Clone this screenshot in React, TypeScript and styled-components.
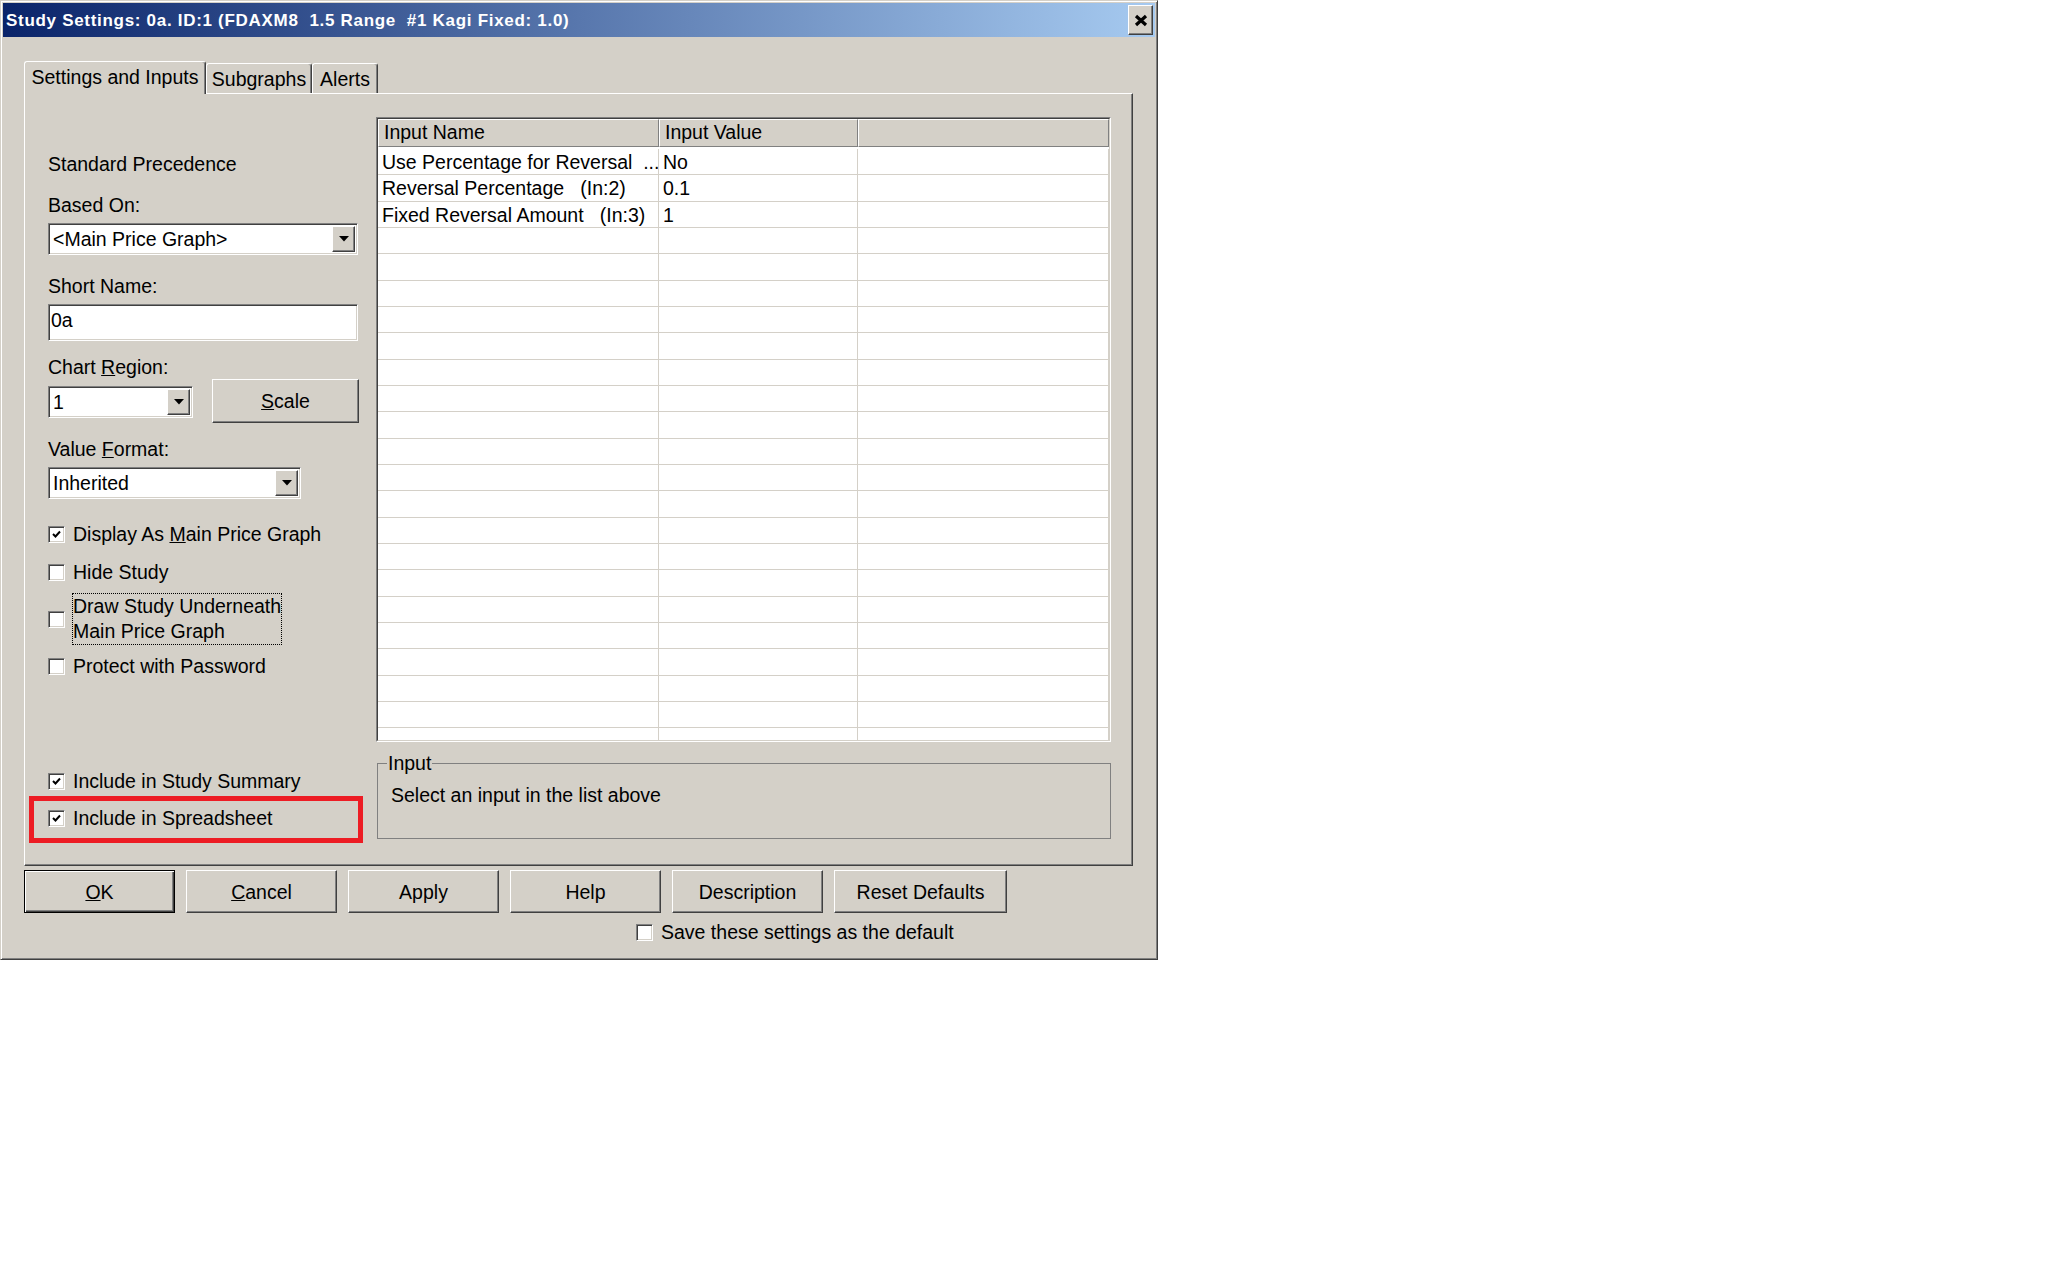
import React from 'react';
import styled, { createGlobalStyle } from 'styled-components';

const GlobalStyle = createGlobalStyle`
  body {
    margin: 0;
    background: #ffffff;
    font-family: "Liberation Sans", Arial, sans-serif;
    font-size: 19.5px;
    color: #000000;
  }
`;

const Window = styled.div`
  width: 1158px;
  height: 960px;
  box-sizing: border-box;
  background: #d4d0c8;
  border: 1px solid;
  border-color: #d4d0c8 #404040 #404040 #d4d0c8;
  box-shadow: inset 1px 1px #ffffff, inset -1px -1px #808080;
  padding: 2px;
  display: flex;
  flex-direction: column;
`;

const TitleBar = styled.div`
  height: 34px;
  flex-shrink: 0;
  display: flex;
  align-items: center;
  justify-content: space-between;
  padding: 0 2px 0 3px;
  background: linear-gradient(to right, #0a246a, #a6caf0);
`;

const TitleText = styled.span`
  color: #ffffff;
  font-weight: bold;
  font-size: 17px;
  letter-spacing: 0.7px;
  white-space: pre;
  padding-top: 1px;
`;

const Raised = `
  background: #d4d0c8;
  border: 1px solid;
  border-color: #ffffff #404040 #404040 #ffffff;
  box-shadow: inset -1px -1px #808080;
`;

const Sunken = `
  background: #ffffff;
  border: 1px solid;
  border-color: #808080 #ffffff #ffffff #808080;
  box-shadow: inset 1px 1px #404040, inset -1px -1px #d4d0c8;
`;

const CloseButton = styled.div`
  ${Raised}
  width: 25px;
  height: 30px;
  box-sizing: border-box;
  display: flex;
  align-items: center;
  justify-content: center;
`;

const Body = styled.div`
  display: flex;
  flex-direction: column;
  padding-left: 21px;
`;

const TabStrip = styled.div`
  margin-top: 24px;
  height: 32px;
  display: flex;
  align-items: flex-end;
`;

const Tab = styled.div<{ $active?: boolean; $width: number }>`
  position: relative;
  z-index: ${p => (p.$active ? 1 : 0)};
  box-sizing: border-box;
  width: ${p => p.$width}px;
  height: ${p => (p.$active ? 33 : 30)}px;
  margin-bottom: ${p => (p.$active ? -1 : 0)}px;
  background: #d4d0c8;
  border: 1px solid;
  border-color: #ffffff #404040 transparent #ffffff;
  border-bottom: none;
  box-shadow: inset -1px 0 #808080;
  border-radius: 3px 3px 0 0;
  padding-top: 4px;
  line-height: 22px;
  text-align: center;
  white-space: nowrap;
`;

const Panel = styled.div`
  box-sizing: border-box;
  width: 1109px;
  height: 773px;
  border: 1px solid;
  border-color: #ffffff #404040 #404040 #ffffff;
  box-shadow: inset -1px -1px #808080;
  display: flex;
`;

const LeftCol = styled.div`
  box-sizing: border-box;
  width: 351px;
  padding-left: 23px;
  display: flex;
  flex-direction: column;
  align-items: flex-start;
`;

const RightCol = styled.div`
  width: 735px;
  display: flex;
  flex-direction: column;
`;

const FieldLabel = styled.div<{ $mt: number }>`
  margin-top: ${p => p.$mt}px;
  line-height: 22px;
  white-space: nowrap;
`;

const Combo = styled.div<{ $width: number; $mt?: number }>`
  ${Sunken}
  box-sizing: border-box;
  width: ${p => p.$width}px;
  height: 32px;
  margin-top: ${p => p.$mt ?? 7}px;
  padding: 2px;
  display: flex;
  align-items: center;
  flex-shrink: 0;
`;

const ComboText = styled.span`
  flex: 1;
  padding-left: 2px;
  line-height: 22px;
  white-space: nowrap;
`;

const DropButton = styled.div`
  ${Raised}
  box-sizing: border-box;
  width: 23px;
  align-self: stretch;
  display: flex;
  align-items: center;
  justify-content: center;
`;

const TextField = styled.div`
  ${Sunken}
  box-sizing: border-box;
  width: 310px;
  height: 37px;
  margin-top: 7px;
  padding: 4px 2px 0;
  line-height: 22px;
`;

const RegionRow = styled.div`
  margin-top: 1px;
  display: flex;
  align-items: flex-start;
  gap: 19px;
`;

const PushButton = styled.div<{ $width: number; $height: number; $default?: boolean }>`
  ${Raised}
  box-sizing: border-box;
  width: ${p => p.$width}px;
  height: ${p => p.$height}px;
  display: flex;
  align-items: center;
  justify-content: center;
  line-height: 22px;
  white-space: nowrap;
  ${p =>
    p.$default &&
    `
    border: 1px solid #000000;
    box-shadow: inset 1px 1px #ffffff, inset -1px -1px #404040, inset -2px -2px #808080;
  `}
`;

const CheckRow = styled.div<{ $mt: number }>`
  margin-top: ${p => p.$mt}px;
  display: flex;
  align-items: center;
  gap: 7px;
`;

const CheckBox = styled.span`
  ${Sunken}
  box-sizing: border-box;
  width: 17px;
  height: 17px;
  flex-shrink: 0;
  display: flex;
  align-items: center;
  justify-content: center;
`;

const CheckLabel = styled.span<{ $focused?: boolean }>`
  border: 1px ${p => (p.$focused ? 'dotted #000000' : 'solid transparent')};
  line-height: ${p => (p.$focused ? 25 : 20)}px;
  white-space: nowrap;
  box-sizing: border-box;
  width: ${p => (p.$focused ? '210px' : 'auto')};
`;

const Highlight = styled.div`
  margin: 4px 0 0 -19px;
  box-sizing: border-box;
  width: 334px;
  border: 5px solid #ed1c24;
  padding: 6px 0 9px 14px;
`;

const GridFrame = styled.div`
  margin-top: 23px;
  height: 625px;
  box-sizing: border-box;
  border: 1px solid;
  border-color: #808080 #ffffff #ffffff #808080;
`;

const GridInner = styled.div`
  height: 100%;
  box-sizing: border-box;
  border: 1px solid;
  border-color: #404040 #d4d0c8 #d4d0c8 #404040;
  background: #ffffff;
  overflow: hidden;
`;

const GridHeader = styled.div`
  display: grid;
  grid-template-columns: 281px 199px 1fr;
  height: 28px;
  margin-bottom: 2px;
`;

const HeaderCell = styled.div`
  box-sizing: border-box;
  background: #d4d0c8;
  border: 1px solid;
  border-color: #ffffff #808080 #808080 #ffffff;
  padding-left: 5px;
  line-height: 25px;
  white-space: nowrap;
`;

const GridRow = styled.div`
  display: grid;
  grid-template-columns: 281px 199px 1fr;
  height: 26.33px;
  box-sizing: border-box;
  border-bottom: 1px solid #d4d0c8;
`;

const Cell = styled.div`
  border-right: 1px solid #d4d0c8;
  padding-left: 4px;
  line-height: 26px;
  white-space: pre;
  overflow: hidden;
`;

const GroupBox = styled.fieldset`
  margin: 10px 0 0 1px;
  width: 734px;
  height: 87px;
  box-sizing: border-box;
  padding: 0 0 0 9px;
  border: 1px solid #808080;
`;

const GroupTitle = styled.legend`
  padding: 0 1px;
  line-height: 22px;
`;

const Hint = styled.div`
  margin: 10px 0 0 4px;
  line-height: 22px;
`;

const ButtonRow = styled.div`
  margin-top: 4px;
  display: flex;
  gap: 11px;
`;

const SaveRow = styled.div`
  margin: 8px 0 0 612px;
  display: flex;
  align-items: center;
  gap: 8px;
  line-height: 22px;
`;

const Arrow = () => (
  <svg width="10" height="6" viewBox="0 0 10 6">
    <polygon points="0,0 10,0 5,5.5" fill="#000" />
  </svg>
);

const Tick = () => (
  <svg width="13" height="13" viewBox="0 0 13 13">
    <polyline points="3,6 5.5,8.5 10,3.5" fill="none" stroke="#000" strokeWidth="2" />
  </svg>
);

const Check = ({ checked }: { checked?: boolean }) => <CheckBox>{checked && <Tick />}</CheckBox>;

const rows: [string, string][] = [
  ['Use Percentage for Reversal  ...', 'No'],
  ['Reversal Percentage   (In:2)', '0.1'],
  ['Fixed Reversal Amount   (In:3)', '1'],
];

const App: React.FC = () => {
  const gridRows = [...rows, ...Array.from({ length: 20 }, () => ['', ''] as [string, string])];

  return (
    <>
      <GlobalStyle />
      <Window>
        <TitleBar>
          <TitleText>Study Settings: 0a. ID:1 (FDAXM8  1.5 Range  #1 Kagi Fixed: 1.0)</TitleText>
          <CloseButton>
            <svg width="14" height="13" viewBox="0 0 14 13">
              <path d="M2 2 L12 11 M12 2 L2 11" stroke="#000" strokeWidth="3.2" />
            </svg>
          </CloseButton>
        </TitleBar>
        <Body>
          <TabStrip>
            <Tab $active $width={182}>Settings and Inputs</Tab>
            <Tab $width={106}>Subgraphs</Tab>
            <Tab $width={66}>Alerts</Tab>
          </TabStrip>
          <Panel>
            <LeftCol>
              <FieldLabel $mt={59}>Standard Precedence</FieldLabel>
              <FieldLabel $mt={19}>Based On:</FieldLabel>
              <Combo $width={310}>
                <ComboText>&lt;Main Price Graph&gt;</ComboText>
                <DropButton><Arrow /></DropButton>
              </Combo>
              <FieldLabel $mt={20}>Short Name:</FieldLabel>
              <TextField>0a</TextField>
              <FieldLabel $mt={15}>Chart <u>R</u>egion:</FieldLabel>
              <RegionRow>
                <Combo $width={145}>
                  <ComboText>1</ComboText>
                  <DropButton><Arrow /></DropButton>
                </Combo>
                <PushButton $width={147} $height={44}><u>S</u>cale</PushButton>
              </RegionRow>
              <FieldLabel $mt={15}>Value <u>F</u>ormat:</FieldLabel>
              <Combo $width={253}>
                <ComboText>Inherited</ComboText>
                <DropButton><Arrow /></DropButton>
              </Combo>
              <CheckRow $mt={24}>
                <Check checked />
                <CheckLabel>Display As <u>M</u>ain Price Graph</CheckLabel>
              </CheckRow>
              <CheckRow $mt={16}>
                <Check />
                <CheckLabel>Hide Study</CheckLabel>
              </CheckRow>
              <CheckRow $mt={10}>
                <Check />
                <CheckLabel $focused>
                  Draw Study Underneath
                  <br />
                  Main Price Graph
                </CheckLabel>
              </CheckRow>
              <CheckRow $mt={10}>
                <Check />
                <CheckLabel>Protect with Password</CheckLabel>
              </CheckRow>
              <CheckRow $mt={93}>
                <Check checked />
                <CheckLabel>Include in Study Summary</CheckLabel>
              </CheckRow>
              <Highlight>
                <CheckRow $mt={0}>
                  <Check checked />
                  <CheckLabel>Include in Spreadsheet</CheckLabel>
                </CheckRow>
              </Highlight>
            </LeftCol>
            <RightCol>
              <GridFrame>
                <GridInner>
                  <GridHeader>
                    <HeaderCell>Input Name</HeaderCell>
                    <HeaderCell>Input Value</HeaderCell>
                    <HeaderCell />
                  </GridHeader>
                  {gridRows.map(([name, value], i) => (
                    <GridRow key={i}>
                      <Cell>{name}</Cell>
                      <Cell>{value}</Cell>
                      <Cell />
                    </GridRow>
                  ))}
                </GridInner>
              </GridFrame>
              <GroupBox>
                <GroupTitle>Input</GroupTitle>
                <Hint>Select an input in the list above</Hint>
              </GroupBox>
            </RightCol>
          </Panel>
          <ButtonRow>
            <PushButton $width={151} $height={43} $default><u>O</u>K</PushButton>
            <PushButton $width={151} $height={43}><u>C</u>ancel</PushButton>
            <PushButton $width={151} $height={43}>Apply</PushButton>
            <PushButton $width={151} $height={43}>Help</PushButton>
            <PushButton $width={151} $height={43}>Description</PushButton>
            <PushButton $width={173} $height={43}>Reset Defaults</PushButton>
          </ButtonRow>
          <SaveRow>
            <Check />
            <span>Save these settings as the default</span>
          </SaveRow>
        </Body>
      </Window>
    </>
  );
};

export default App;
